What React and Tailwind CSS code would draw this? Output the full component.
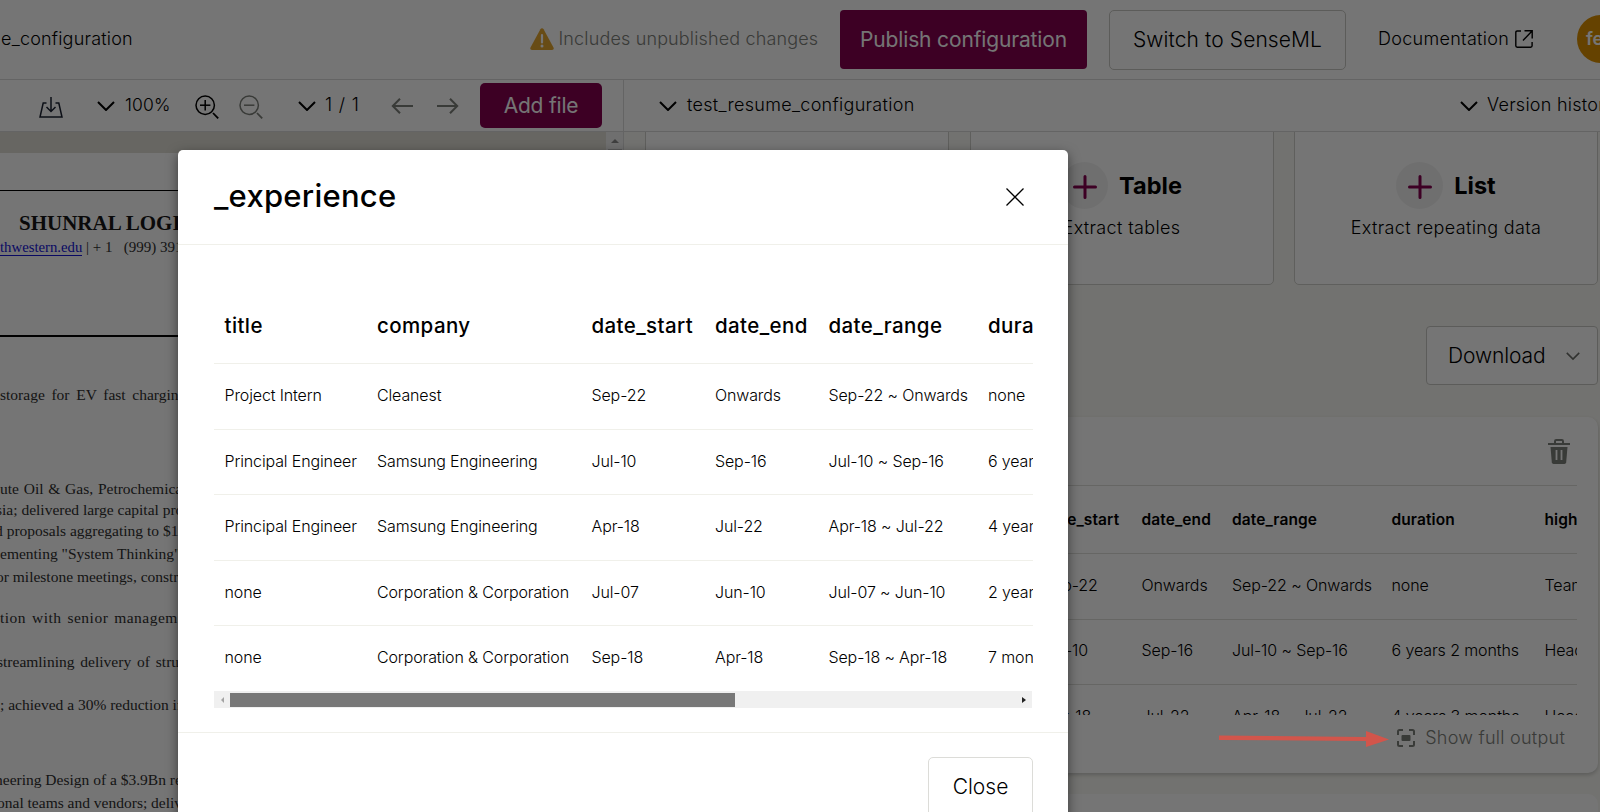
const experience = [
  { title: 'Project Intern', company: 'Cleanest', start: 'Sep-22', end: 'Onwards', range: 'Sep-22 ~ Onwards', duration: 'none', highlights: 'Team lead' },
  { title: 'Principal Engineer', company: 'Samsung Engineering', start: 'Jul-10', end: 'Sep-16', range: 'Jul-10 ~ Sep-16', duration: '6 years 2 months', highlights: 'Headed' },
  { title: 'Principal Engineer', company: 'Samsung Engineering', start: 'Apr-18', end: 'Jul-22', range: 'Apr-18 ~ Jul-22', duration: '4 years 3 months', highlights: 'Headed' },
  { title: 'none', company: 'Corporation & Corporation', start: 'Jul-07', end: 'Jun-10', range: 'Jul-07 ~ Jun-10', duration: '2 years 11 months', highlights: 'none' },
  { title: 'none', company: 'Corporation & Corporation', start: 'Sep-18', end: 'Apr-18', range: 'Sep-18 ~ Apr-18', duration: '7 months', highlights: 'none' },
];

const columns = ['title', 'company', 'date_start', 'date_end', 'date_range', 'duration', 'highlights'];
const keys = ['title', 'company', 'start', 'end', 'range', 'duration', 'highlights'];

const resumeLines = [
  { text: 'storage for EV fast chargin', cls: 'mt-[48px] [word-spacing:2.8px]' },
  { text: 'ute Oil & Gas, Petrochemica', cls: 'mt-[74px] [word-spacing:0.9px]' },
  { text: 'sia; delivered large capital pro', cls: 'mt-px -ml-[4px]' },
  { text: 'd proposals aggregating to $1', cls: 'mt-px -ml-[5px]' },
  { text: 'ementing "System Thinking"', cls: 'mt-[3px]' },
  { text: 'or milestone meetings, constr', cls: 'mt-[3px] -ml-[4px]' },
  { text: 'tion with senior managem', cls: 'mt-[21px] [word-spacing:1.5px] tracking-[0.5px]' },
  { text: 'streamlining delivery of stru', cls: 'mt-[24px] -ml-[3px] [word-spacing:2px]' },
  { text: '; achieved a 30% reduction in', cls: 'mt-[23px]' },
  { text: 'neering Design of a $3.9Bn re', cls: 'mt-[55px] -ml-[5px]' },
  { text: 'onal teams and vendors; deliv', cls: 'mt-[3px] -ml-[3px]' },
];

function Chevron({ className }) {
  return (
    <svg viewBox="0 0 18 10" fill="none" stroke="currentColor" strokeWidth="2" className={className}>
      <path d="M1 1l8 8 8-8" />
    </svg>
  );
}

function Magnifier({ plus, className }) {
  return (
    <svg viewBox="0 0 24 24" fill="none" stroke="currentColor" strokeWidth="1.5" className={className}>
      <circle cx="10.2" cy="10.2" r="9.2" />
      <path d="M5 10.2h10.4" />
      {plus && <path d="M10.2 5v10.4" />}
      <path d="M18 18l5.2 5.4" strokeWidth="1.8" />
    </svg>
  );
}

function Header() {
  return (
    <header className="h-20 shrink-0 flex items-center border-b border-[#d9d9d9] overflow-hidden whitespace-nowrap">
      <span className="shrink-0 text-[18px] tracking-[0.2px] w-[529.5px] pl-px -mt-0.5">e_configuration</span>
      <div className="shrink-0 flex items-center text-[#7d807a] w-[310.5px] -mt-0.5">
        <svg viewBox="0 0 24 22" className="w-6 h-[22px] mr-[5px]">
          <path d="M10.4 1.2c.8-1.3 2.4-1.3 3.2 0l9.9 18.2c.7 1.3-.1 2.6-1.5 2.6H2c-1.400 0-2.200-1.300-1.500-2.600z" fill="#e3a62f" />
          <path d="M12 7v7.500" stroke="#fff" strokeWidth="2.200" strokeLinecap="round" />
          <circle cx="12" cy="18" r="1.500" fill="#fff" />
        </svg>
        <span className="text-[18px] tracking-[0.15px]">Includes unpublished changes</span>
      </div>
      <button className="shrink-0 w-[247px] h-[59px] rounded-[4px] bg-[#850050] text-white text-[21px] tracking-[-0.15px] font-normal">Publish configuration</button>
      <button className="shrink-0 ml-[22px] w-[237px] h-[60px] rounded-[5px] border border-[#c9c9c4] text-[21px] tracking-[0.1px]">Switch to SenseML</button>
      <div className="shrink-0 ml-[32px] w-[199px] flex items-center gap-1.5 -mt-0.5">
        <span className="text-[18px] tracking-[0.3px]">Documentation</span>
        <svg viewBox="0 0 18 18" fill="none" stroke="currentColor" strokeWidth="1.400" className="w-[18px] h-[18px]">
          <path d="M6 1H2.200Q.8 1 .8 2.400v13.400q0 1.400 1.400 1.400h13.400q1.500 0 1.500-1.400V12" />
          <path d="M9.500.8h7.700V8.500M17 1L8 10.500" />
        </svg>
      </div>
      <div className="w-12 h-12 shrink-0 rounded-full bg-[#dc9000] text-white text-lg font-semibold pl-[9px] flex items-center -mt-0.5">fe</div>
    </header>
  );
}

function DocumentPanel() {
  return (
    <section className="w-[624px] shrink-0 border-r border-[#d9d9d9] flex flex-col">
      <div className="h-[52px] shrink-0 flex items-center border-b border-[#d9d9d9]">
        <svg viewBox="0 0 24 21" fill="none" stroke="#1d2433" strokeWidth="1.500" className="w-6 h-[21px] ml-[39px] mt-1">
          <path d="M7.500 6H4.200L1 20h22L19.800 6h-3.300" />
          <path d="M12 0v14M7.500 10l4.500 4.500 4.500-4.500" />
        </svg>
        <Chevron className="w-[18px] h-2.5 ml-[34px]" />
        <span className="text-[17.5px] tracking-[0.2px] ml-[10px] w-[45px]">100%</span>
        <Magnifier plus className="w-6 h-6 ml-[25px] mt-0.5" />
        <Magnifier className="w-6 h-6 ml-5 mr-px mt-0.5 text-[#7d807a]" />
        <Chevron className="w-[18px] h-2.5 ml-[34px]" />
        <span className="text-[18px] tracking-[0.8px] ml-[9px] w-9 -mt-0.5 whitespace-nowrap">1 / 1</span>
        <svg viewBox="0 0 22 16" fill="none" stroke="#7d807a" strokeWidth="2" className="w-[22px] h-4 ml-[30px]">
          <path d="M22 8H2M9 .8L1.800 8 9 15.200" />
        </svg>
        <svg viewBox="0 0 22 16" fill="none" stroke="#7d807a" strokeWidth="2" className="w-[22px] h-4 ml-[24px]">
          <path d="M0 8h20M13 .8L20.200 8 13 15.200" />
        </svg>
        <button className="ml-[21px] w-[122px] h-[45px] rounded-[5px] bg-[#850050] text-white text-[21px] tracking-[-0.2px] font-normal">Add file</button>
      </div>
      <div className="flex-1 min-h-0 flex">
        <div className="flex-1 bg-[#e0ded5] pt-[21px] min-w-0">
          <div className="bg-white h-full overflow-hidden font-['Liberation_Serif',serif] text-[#303030] font-normal text-[15.5px] leading-5 whitespace-nowrap">
            <div className="mt-[37px] border-t border-black" />
            <h2 className="mt-[20px] ml-[19px] text-[21px] leading-6 font-bold text-[#161616]">SHUNRAL LOGISTICS</h2>
            <p className="mt-[2px] text-[15px]"><span className="text-[14.75px] text-[#1414d8] border-b border-[#1414d8]">thwestern.edu</span> | + 1 &nbsp;&nbsp;(999) 391</p>
            <div className="mt-[78px] border-t-2 border-black" />
            {resumeLines.map((line) => (
              <p key={line.text} className={line.cls}>{line.text}</p>
            ))}
          </div>
        </div>
        <div className="w-[17px] bg-[#f1f1f1] flex flex-col items-center">
          <div className="mt-[7px] border-x-4 border-b-4 border-x-transparent border-b-[#8a8a8a]" />
          <div className="mt-1.5 w-3.5 h-[300px] bg-[#c1c1c1]" />
        </div>
      </div>
    </section>
  );
}

function MethodCard({ name, desc }) {
  return (
    <div className="w-[304px] shrink-0 h-[159px] -mt-[6px] bg-white border border-[#cfcfca] rounded-[5px] flex flex-col items-center pt-[35px]">
      <div className="flex items-center gap-[11px]">
        <span className="w-[47px] h-[47px] rounded-full bg-[#f2f2f2] flex items-center justify-center">
          <svg viewBox="0 0 24 24" stroke="#850050" strokeWidth="3" strokeLinecap="round" className="w-6 h-6 mt-[3px]">
            <path d="M12 1.500v21M1.500 12h21" />
          </svg>
        </span>
        <span className="text-[23.5px] leading-8 font-bold">{name}</span>
      </div>
      <p className="text-[18px] leading-[26px] tracking-[0.35px] mt-[6px]">{desc}</p>
    </div>
  );
}

function OutputTable() {
  return (
    <div className="h-[229px] overflow-hidden">
      <table className="table-fixed w-[1100px] -ml-px border-separate border-spacing-0 text-left text-base tracking-[-0.1px] whitespace-nowrap">
        <colgroup>
          <col className="w-[153px]" />
          <col className="w-[214px]" />
          <col className="w-[98.5px]" />
          <col className="w-[90.5px]" />
          <col className="w-[159.5px]" />
          <col className="w-[153px]" />
          <col />
        </colgroup>
        <thead>
          <tr>
            {columns.map((c) => (
              <th key={c} className="h-[68px] px-[11px] py-0 font-semibold text-[15.5px] tracking-[0.1px] border-b border-[#dededa]">{c}</th>
            ))}
          </tr>
        </thead>
        <tbody>
          {experience.slice(0, 3).map((row, i) => (
            <tr key={i}>
              {keys.map((k) => (
                <td key={k} className="h-[65.5px] px-[11px] pt-0 pb-[3px] border-b border-[#dededa]">{row[k]}</td>
              ))}
            </tr>
          ))}
        </tbody>
      </table>
    </div>
  );
}

function ConfigPanel() {
  return (
    <section className="flex-1 min-w-0 flex flex-col">
      <div className="h-[52px] shrink-0 flex items-center border-b border-[#d9d9d9] pl-[35px]">
        <Chevron className="w-[18px] h-2.5" />
        <span className="text-[18px] tracking-[0.3px] ml-[10px] -mt-0.5">test_resume_configuration</span>
        <div className="ml-auto w-[140px] flex items-center whitespace-nowrap">
          <Chevron className="w-[18px] h-2.5 shrink-0" />
          <span className="text-[18px] tracking-[0.25px] ml-[9px] -mt-0.5">Version history</span>
        </div>
      </div>
      <div className="flex-1 min-h-0 overflow-hidden bg-[#f9f9f4] pl-[21px] pr-0.5">
        <div className="flex justify-between">
          <MethodCard name="Fields" desc="Extract fields" />
          <MethodCard name="Table" desc="Extract tables" />
          <MethodCard name="List" desc="Extract repeating data" />
        </div>
        <div className="flex justify-end mt-[41px]">
          <button className="w-[172px] h-[59px] bg-white border border-[#c9c9c4] rounded-[4px] flex items-center pl-[21px] text-[21px]">
            <span className="w-[97px] text-left tracking-[-0.1px]">Download</span>
            <Chevron className="w-3.5 h-2.5 ml-[21px] text-[#6b6e69]" />
          </button>
        </div>
        <div className="mt-8 h-[356px] bg-white rounded-[10px] shadow-[0_2px_4px_rgba(0,0,0,0.2)] px-[21px] flex flex-col">
          <div className="h-[69px] border-b border-[#dededa] flex items-center justify-end pr-[7px]">
            <svg viewBox="0 0 22 25" className="w-[22px] h-[25px] text-[#7d807a]">
              <path d="M0 5h22M7 5V2.200Q7 1 8.200 1h5.600Q15 1 15 2.200V5" fill="none" stroke="currentColor" strokeWidth="2" />
              <path d="M2.500 8h17l-1.300 15.200Q18 25 16.400 25H5.600Q4 25 3.800 23.200z" fill="currentColor" />
              <path d="M8.500 11v10M13.500 11v10" stroke="#fff" strokeWidth="1.800" />
            </svg>
          </div>
          <OutputTable />
          <div className="flex justify-end items-center gap-2.5 pr-3 pt-[9px] text-[#7d807a]">
            <svg viewBox="0 0 18 18" fill="none" stroke="currentColor" strokeWidth="2" className="w-[18px] h-[18px]">
              <path d="M1 6V2.500Q1 1 2.500 1H6M12 1h3.500Q17 1 17 2.500V6M17 12v3.500q0 1.500-1.500 1.500H12M6 17H2.500Q1 17 1 15.500V12" />
              <rect x="4.500" y="6" width="9" height="6" rx="1" fill="currentColor" stroke="none" />
            </svg>
            <span className="text-[18px] leading-7 tracking-[0.25px]">Show full output</span>
          </div>
        </div>
        <div className="mt-[21px] h-[100px] bg-white rounded-[10px]" />
      </div>
    </section>
  );
}

function ExperienceModal() {
  return (
    <div className="w-[890px] h-[700px] bg-white rounded-[5px] shadow-[0_4px_12px_rgba(0,0,0,0.5)] flex flex-col">
      <div className="h-[95px] shrink-0 border-b border-[#f0f0ea] flex items-center justify-between pl-9 pr-[44px]">
        <h1 className="text-[31px] font-medium tracking-[0.25px] -mt-px">_experience</h1>
        <svg viewBox="0 0 18 18" stroke="#000" strokeWidth="1.300" className="w-[18px] h-[18px]">
          <path d="M.5.5l17 17M17.500.5l-17 17" />
        </svg>
      </div>
      <div className="pl-9 pr-[35px] pt-[42px] h-[488px] shrink-0 border-b border-[#f0f0ea]">
        <div className="h-[404px] overflow-hidden">
          <table className="table-fixed w-[1200px] border-separate border-spacing-0 text-left text-base tracking-[-0.13px] whitespace-nowrap">
            <colgroup>
              <col className="w-[152.5px]" />
              <col className="w-[214.5px]" />
              <col className="w-[123.5px]" />
              <col className="w-[113.5px]" />
              <col className="w-[159.5px]" />
              <col className="w-[160px]" />
              <col />
            </colgroup>
            <thead>
              <tr>
                {columns.map((c) => (
                  <th key={c} className="h-[77px] px-[10.5px] pt-0.5 pb-0 text-[20.5px] font-medium tracking-[0.4px] border-b border-[#f0f0ea]">{c}</th>
                ))}
              </tr>
            </thead>
            <tbody>
              {experience.map((row, i) => (
                <tr key={i}>
                  {keys.map((k) => (
                    <td key={k} className="h-[65.5px] px-[10.5px] pt-0 pb-0.5 border-b border-[#f0f0ea]">{row[k]}</td>
                  ))}
                </tr>
              ))}
            </tbody>
          </table>
        </div>
        <div className="h-[17px] w-[818px] bg-[#f0f0f0] flex items-center">
          <div className="ml-[7px] border-y-[3px] border-r-[3px] border-y-transparent border-r-[#a3a3a3]" />
          <div className="ml-1.5 w-[505px] h-3.5 bg-[#787878]" />
          <div className="ml-auto mr-[6px] border-y-[3px] border-l-[4px] border-y-transparent border-l-[#222]" />
        </div>
      </div>
      <div className="flex justify-end px-[35px] pt-6">
        <button className="w-[105px] h-[60px] rounded-[5px] border border-[#dcdcd8] text-[21px]">Close</button>
      </div>
    </div>
  );
}

export default function App() {
  return (
    <div className="relative w-[1600px] h-[812px] overflow-hidden bg-white text-black font-light font-['Inter',sans-serif]">
      <div className="h-full flex flex-col">
        <Header />
        <div className="flex-1 min-h-0 flex">
          <DocumentPanel />
          <ConfigPanel />
        </div>
      </div>
      <div className="absolute inset-0 bg-black/54 overflow-hidden pl-[178px] pt-[150px]">
        <ExperienceModal />
      </div>
      {/* pointer to the full output link */}
      <svg viewBox="0 0 172 18" className="absolute left-[1218px] top-[730px] w-[172px] h-[18px]">
        <path d="M1 5.500L148 7V1l23 8.500L148 17v-6L1 10z" fill="#d2554b" />
      </svg>
    </div>
  );
}
